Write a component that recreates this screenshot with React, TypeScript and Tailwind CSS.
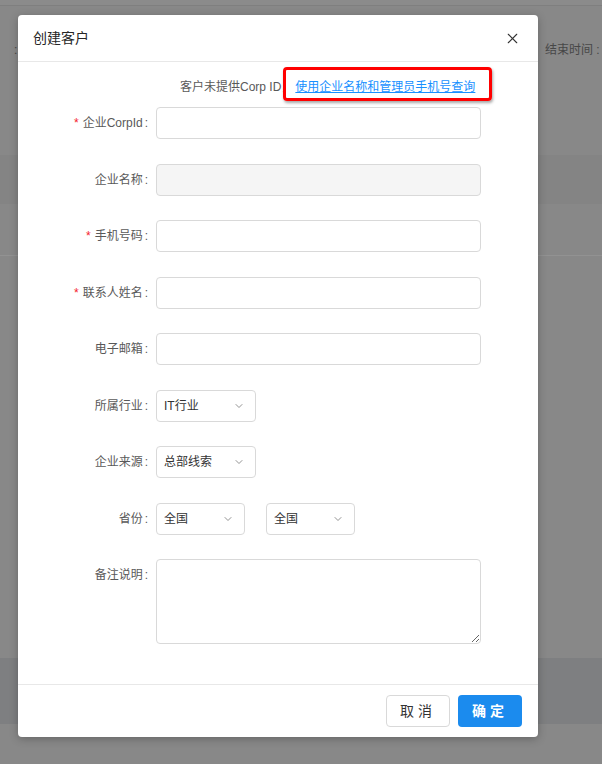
import { X, ChevronDown } from 'lucide-react'

const font = "font-['Liberation_Sans','Noto_Sans_CJK_SC',sans-serif]"

interface RowProps {
  label: string
  required?: boolean
  top?: boolean
  children: React.ReactNode
  last?: boolean
}

const Row = ({ label, required, top, children, last }: RowProps) => {
  return (
    <div className={`flex ${top ? 'items-start' : 'items-center'} ${last ? '' : 'mb-[24.5px]'}`}>
      <div className="flex h-[32px] w-[138px] shrink-0 items-center justify-end text-[12px] text-[#595959]">
        {required && <span className="mr-[4px] text-[12px] text-[#f5222d]">*</span>}
        <span>{label}</span>
        <span className="ml-[2px] mr-[8px]">:</span>
      </div>
      {children}
    </div>
  )
}

const TextInput = ({ disabled }: { disabled?: boolean }) => (
  <div
    className={`h-[32px] w-[325px] rounded-[4px] border border-[#d9d9d9] ${disabled ? 'bg-[#f5f5f5]' : 'bg-white'}`}
  />
)

const Select = ({ value, width }: { value: string; width: string }) => (
  <div
    className={`flex h-[32px] ${width} items-center justify-between rounded-[4px] border border-[#d9d9d9] bg-white pl-[7px] pr-[10px] text-[12px] text-[#333]`}
  >
    <span>{value}</span>
    <ChevronDown size={12} strokeWidth={1.6} className="text-[#777]" />
  </div>
)

const App = () => {
  return (
    <div className={`relative h-[764px] w-[602px] overflow-hidden bg-[#888888] ${font}`}>
      {/* dimmed page behind the dialog */}
      <div className="h-[6px] border-b border-[#7f7f7f] bg-[#8b8b8b]" />
      <div className="h-[149px] pl-[14px] pt-[35px] text-[12px] text-[#474747]">
        <div className="flex justify-between">
          <span>:</span>
          <span className="w-[57px]">结束时间 :</span>
        </div>
      </div>
      <div className="h-[49px] bg-[#848484]" />
      <div className="h-[52px] border-b border-[#929292]" />
      <div className="h-[402px]" />
      <div className="h-[66px] bg-[#7e7f81]" />

      {/* dialog */}
      <div className="absolute left-[18px] top-[15px] flex w-[520px] flex-col rounded-[4px] bg-white shadow-[0_2px_8px_rgba(0,0,0,0.25)]">
        <div className="flex h-[47px] items-center justify-between border-b border-[#e8e8e8] pl-[15px] pr-[17px]">
          <span className="text-[14px] text-[#262626]">创建客户</span>
          <X size={17} strokeWidth={1.5} className="text-[#333]" />
        </div>

        <div className="relative pb-[40px] pt-[13px]">
          <div className="mb-[8px] h-[24px] pl-[162px] text-[12px] leading-[24px] text-[#595959]">
            客户未提供Corp ID，
            <span className="ml-[2px] text-[#1890ff] underline">使用企业名称和管理员手机号查询</span>
          </div>
          <div className="absolute left-[265px] top-[5px] h-[34px] w-[209px] rounded-[4px] border-[3px] border-[#ff0000] shadow-[1px_2px_3px_rgba(0,0,0,0.35)]" />

          <Row label="企业CorpId" required>
            <TextInput />
          </Row>
          <Row label="企业名称">
            <TextInput disabled />
          </Row>
          <Row label="手机号码" required>
            <TextInput />
          </Row>
          <Row label="联系人姓名" required>
            <TextInput />
          </Row>
          <Row label="电子邮箱">
            <TextInput />
          </Row>
          <Row label="所属行业">
            <Select value="IT行业" width="w-[100px]" />
          </Row>
          <Row label="企业来源">
            <Select value="总部线索" width="w-[100px]" />
          </Row>
          <Row label="省份">
            <div className="flex gap-[21px]">
              <Select value="全国" width="w-[89px]" />
              <Select value="全国" width="w-[89px]" />
            </div>
          </Row>
          <Row label="备注说明" top last>
            <textarea className="block h-[85px] w-[325px] rounded-[4px] border border-[#d9d9d9] bg-white outline-none" />
          </Row>
        </div>

        <div className="flex justify-end gap-[8px] border-t border-[#e8e8e8] px-[16px] py-[10px]">
          <button className="h-[32px] w-[64px] rounded-[4px] border border-[#d9d9d9] bg-white text-[14px] tracking-[4px] text-[#333]">
            取消
          </button>
          <button className="h-[32px] w-[64px] rounded-[4px] bg-[#1b8bee] text-[14px] font-bold tracking-[4px] text-white">
            确定
          </button>
        </div>
      </div>
    </div>
  )
}

export default App
